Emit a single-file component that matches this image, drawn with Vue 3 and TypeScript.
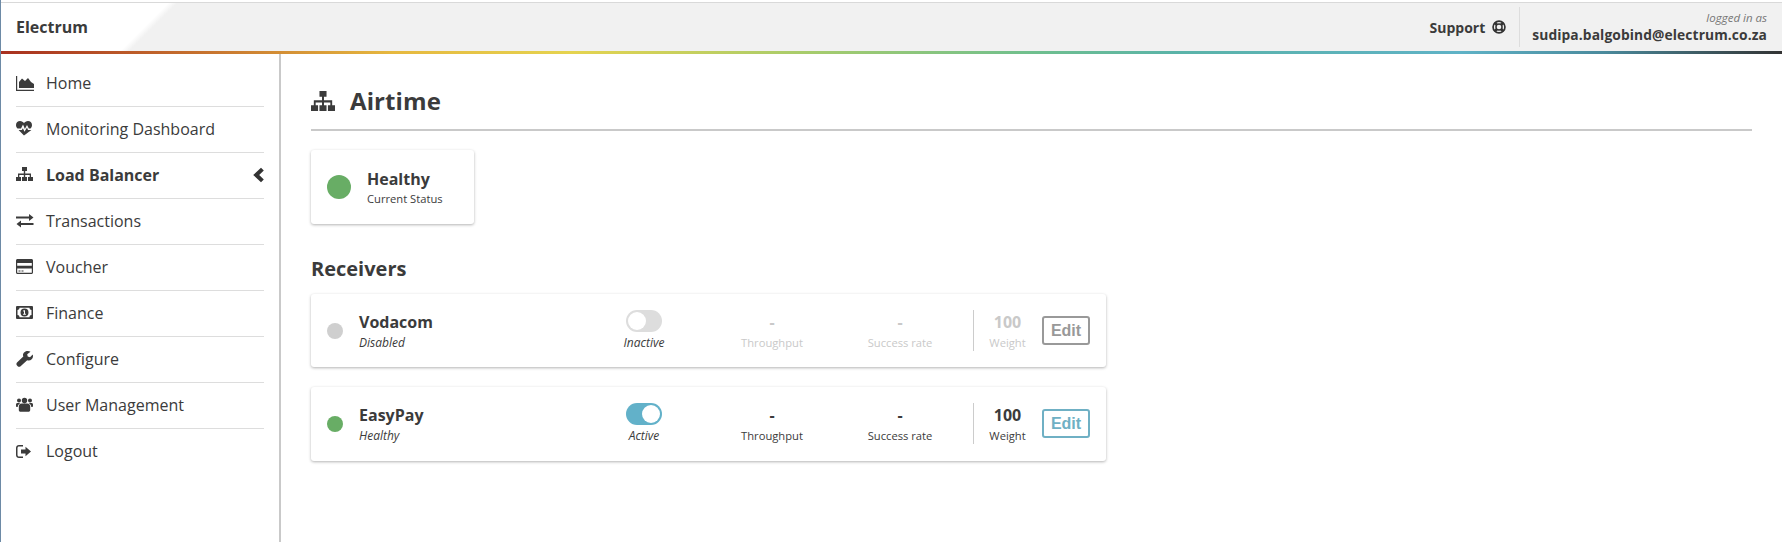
<script setup lang="ts">
interface NavItem { label: string; d: string; active?: boolean }
const nav: NavItem[] = [
  { label: 'Home', d: 'M0 2h1.200v13.800H18V17H0zM3 14V8l3-3.500L9 7l3-3 3 4 3 2v4z' },
  { label: 'Monitoring Dashboard', d: 'M8 15.500 2.600 10h3.200l1.100-1.800 1.600 3.600L11 7.600l1 2.400h3.400zM1.500 8.500C.6 7.500 0 6.400 0 5c0-2.500 1.900-4 4-4 1.800 0 3.200 1 4 2.200C8.800 2 10.200 1 12 1c2.100 0 4 1.500 4 4 0 1.400-.6 2.500-1.500 3.500h-1.700L11 5 8.900 9 7 4.600 5 8.500z' },
  { label: 'Load Balancer', active: true, d: 'M6 1h5v4H9.200v2.500H15V11h2v4h-5v-4h1.700V9H9.200v2H11v4H6v-4h1.800V9H3.300v2H5v4H0v-4h2V7.500h5.800V5H6z' },
  { label: 'Transactions', d: 'M0 4.500h13V2l4.500 3.500L13 9V6.500H0zM17.500 11H5V8.500L.5 12 5 15.500V13h12.500z' },
  { label: 'Voucher', d: 'M1.500 1h14c.8 0 1.500.7 1.500 1.500v12c0 .8-.7 1.500-1.500 1.500h-14C.7 16 0 15.300 0 14.500v-12C0 1.700.7 1 1.500 1zM1.200 5v2.800h14.600V5zM1.200 10.500v4.300h14.600v-4.300zM2.500 12.500h2v1h-2zM5.500 12.500h2v1h-2z' },
  { label: 'Finance', d: 'M1 2h15a1 1 0 0 1 1 1v11a1 1 0 0 1-1 1H1a1 1 0 0 1-1-1V3a1 1 0 0 1 1-1zM3.500 3.800c0 1.300-.8 2.200-2 2.200v5c1.200 0 2 .9 2 2.200h10c0-1.300.8-2.200 2-2.200V6c-1.200 0-2-.9-2-2.200zM8.500 4.500a4 4 0 1 1 0 8 4 4 0 0 1 0-8zM7.200 6.600v1h.8v2.200h-.9v1h2.800v-1H9V6.300H8z' },
  { label: 'Configure', d: 'M11.800 1c1 0 2 .3 2.700.8l-3.300 2.500.5 2.300 2.300.6 2.700-2.700c.3.600.3 1.200.3 1.700 0 2.500-2 4.300-4.300 4.300-.6 0-1-.1-1.500-.3L4.600 16.200c-.8.8-2.100.8-2.900 0l-.7-.7c-.8-.8-.8-2.100 0-2.900l6.300-6.200c-.2-.5-.3-1-.3-1.500C7 3 9.200 1 11.800 1z' },
  { label: 'User Management', d: 'M5.800 7.600h5.400c1.700 0 3 1.300 3 3v3.400c0 1-.8 1.800-1.800 1.800H4.600c-1 0-1.800-.8-1.800-1.800v-3.400c0-1.700 1.300-3 3-3zM8.500 1.800a2.700 2.700 0 1 1 0 5.400 2.700 2.700 0 0 1 0-5.400zM3 2.400a2 2 0 1 1 0 4 2 2 0 0 1 0-4zM14 2.400a2 2 0 1 1 0 4 2 2 0 0 1 0-4zM0 8.500C0 7.500.7 7 1.500 7h3c-1.800 1-2.700 2-2.800 4H1c-.6 0-1-.5-1-1zM17 8.500C17 7.500 16.300 7 15.500 7h-3c1.800 1 2.700 2 2.800 4h.7c.6 0 1-.5 1-1z' },
  { label: 'Logout', d: 'M3 2h4v1.500H3C2.200 3.500 1.500 4.200 1.500 5v7c0 .8.7 1.500 1.500 1.500h4V15H3c-1.700 0-3-1.300-3-3V5c0-1.700 1.300-3 3-3zM9.500 3.800 15 8.500l-5.500 4.700V10.500H5v-4h4.500z' },
]
const sitemap = nav[2].d

interface Receiver { name: string; note: string; state: string; on: boolean }
const receivers: Receiver[] = [
  { name: 'Vodacom', note: 'Disabled', state: 'Inactive', on: false },
  { name: 'EasyPay', note: 'Healthy', state: 'Active', on: true },
]
</script>

<template>
  <div class="page">
    <header class="topbar">
      <div class="brand">Electrum</div>
      <div class="account">
        <div class="support">
          <span>Support</span>
          <svg class="ring" viewBox="0 0 16 16" aria-hidden="true">
            <circle cx="8" cy="8" r="6.800" fill="none" stroke="#333" stroke-width="1.900" />
            <circle cx="8" cy="8" r="3.500" fill="none" stroke="#333" stroke-width="1.700" />
            <path d="M3.200 3.200l2.400 2.400M12.800 3.200l-2.400 2.400M3.200 12.800l2.400-2.400M12.800 12.800l-2.400-2.400" stroke="#333" stroke-width="3" fill="none" />
          </svg>
        </div>
        <div class="user">
          <em>logged in as</em>
          <strong>sudipa.balgobind@electrum.co.za</strong>
        </div>
      </div>
    </header>
    <div class="rainbow"></div>
    <div class="body">
      <aside class="sidebar">
        <a v-for="item in nav" :key="item.label" class="nav-item" :class="{ active: item.active }">
          <svg class="nav-icon" viewBox="0 0 18 17" aria-hidden="true"><path :d="item.d" fill="#3b3b3b" fill-rule="evenodd" /></svg>
          <span>{{ item.label }}</span>
          <svg v-if="item.active" class="chev" viewBox="0 0 12 16" aria-hidden="true"><path d="M9 .8 11.800 3.600 7.200 8l4.600 4.400L9 15.200 1.200 8z" fill="#333" /></svg>
        </a>
      </aside>
      <main class="content">
        <h1 class="title">
          <svg class="title-icon" viewBox="0 1 17 14" preserveAspectRatio="none" aria-hidden="true"><path :d="sitemap" fill="#3b3b3b" /></svg>
          Airtime
        </h1>
        <section class="status-card">
          <i class="dot big green"></i>
          <div>
            <div class="status-name">Healthy</div>
            <div class="small">Current Status</div>
          </div>
        </section>
        <h2 class="sub">Receivers</h2>
        <div class="rows">
          <article v-for="r in receivers" :key="r.name" class="row" :class="{ off: !r.on }">
            <i class="dot" :class="r.on ? 'green' : 'grey'"></i>
            <div class="who">
              <div class="who-name">{{ r.name }}</div>
              <em class="note">{{ r.note }}</em>
            </div>
            <div class="toggle-col">
              <span class="toggle" :class="{ on: r.on }"><span class="knob"></span></span>
              <em class="note">{{ r.state }}</em>
            </div>
            <div class="metric through"><b>-</b><span class="small">Throughput</span></div>
            <div class="metric rate"><b>-</b><span class="small">Success rate</span></div>
            <div class="metric weight"><b>100</b><span class="small">Weight</span></div>
            <button class="edit" type="button">Edit</button>
          </article>
        </div>
      </main>
    </div>
  </div>
</template>

<style>
html, body { margin: 0; background: #fff; }
</style>

<style scoped>
.page {
  height: 542px;
  overflow: hidden;
  display: flex;
  flex-direction: column;
  font-family: "Open Sans", sans-serif;
  color: #3b3b3b;
  border-left: 1px solid #6d8aa6;
  box-sizing: border-box;
  background: #fff;
}
.topbar {
  margin-top: 2px;
  height: 49px;
  flex: none;
  box-sizing: border-box;
  border-top: 1px solid #d9d9d9;
  background: #f1f1f1;
  display: flex;
  align-items: center;
  justify-content: space-between;
}
.brand {
  align-self: stretch;
  width: 175px;
  box-sizing: border-box;
  padding-left: 15px;
  background: linear-gradient(135deg, #fff 75%, #f1f1f1 79%);
  display: flex;
  align-items: center;
  font-size: 16px;
  font-weight: 700;
}
.account { display: flex; align-items: center; height: 40px; padding-right: 15px; }
.support {
  display: flex;
  align-items: center;
  gap: 7px;
  height: 100%;
  padding-right: 13px;
  border-right: 1px solid #ddd;
  font-size: 14px;
  font-weight: 700;
}
.ring { width: 14px; height: 14px; }
.user {
  padding-left: 12px;
  display: flex;
  flex-direction: column;
  align-items: flex-end;
}
.user em { font-size: 11.500px; line-height: 15px; color: #777; }
.user strong { font-size: 13.800px; line-height: 19px; letter-spacing: .1px; }
.rainbow {
  height: 3px;
  flex: none;
  background: linear-gradient(90deg, #a8301f 0%, #c8762f 12%, #e6b83f 22%, #e5d34f 32%, #a8cc6b 45%, #6fbf8e 58%, #5ab3a8 66%, #5fb2c6 82%, #4a8a9c 90%, #333 100%);
}
.body { flex: 1; display: flex; min-height: 0; }
.sidebar {
  width: 280px;
  flex: none;
  box-sizing: border-box;
  padding: 7px 15px 0;
  border-right: 2px solid #c9c9c9;
}
.nav-item {
  height: 46px;
  box-sizing: border-box;
  padding-bottom: 2px;
  display: flex;
  align-items: center;
  font-size: 16px;
  border-bottom: 1px solid #ddd;
}
.nav-item:last-child { border-bottom: 0; }
.nav-item.active { font-weight: 700; }
.nav-icon { width: 18px; height: 17px; margin-right: 12px; flex: none; }
.chev { width: 12px; height: 16px; margin-left: auto; }
.content { flex: 1; min-width: 0; padding: 0 30px 0 30px; }
.title {
  margin: 0;
  height: 77px;
  box-sizing: border-box;
  padding-top: 18px;
  border-bottom: 2px solid #c9c9c9;
  display: flex;
  align-items: center;
  gap: 15px;
  font-size: 24px;
  font-weight: 700;
  letter-spacing: .1px;
}
.title-icon { width: 24px; height: 20px; margin-top: 1px; }
.status-card {
  margin-top: 19px;
  width: 163px;
  height: 74px;
  box-sizing: border-box;
  padding-left: 16px;
  display: flex;
  align-items: center;
  gap: 16px;
  background: #fff;
  border-radius: 3px;
  box-shadow: 0 1px 3px rgba(0, 0, 0, .3);
}
.status-name { font-size: 16px; font-weight: 700; line-height: 22px; }
.small { font-size: 11.200px; line-height: 17px; }
.note { font-size: 12px; line-height: 17px; }
.dot { display: block; border-radius: 50%; flex: none; width: 16px; height: 16px; }
.dot.big { width: 24px; height: 24px; }
.green { background: #68ad65; }
.grey { background: #cfcfcf; }
.sub { margin: 31px 0 12px; font-size: 20px; line-height: 27px; font-weight: 700; }
.rows { display: flex; flex-direction: column; gap: 20px; width: 795px; }
.row {
  height: 73px;
  box-sizing: border-box;
  display: flex;
  align-items: center;
  padding-left: 16px;
  background: #fff;
  border-radius: 3px;
  box-shadow: 0 1px 3px rgba(0, 0, 0, .3);
}
.row:last-child { height: 74px; padding-bottom: 1px; }
.who { margin-left: 16px; width: 254px; display: flex; flex-direction: column; }
.who-name { font-size: 16px; font-weight: 700; line-height: 23px; }
.toggle-col { width: 60px; margin-left: 1px; display: flex; flex-direction: column; align-items: center; gap: 2px; }
.toggle {
  width: 36px;
  height: 22px;
  box-sizing: border-box;
  padding: 2px;
  border-radius: 11px;
  background: #ddd;
  display: flex;
}
.toggle.on { background: #62b1c9; justify-content: flex-end; }
.knob { width: 18px; height: 18px; border-radius: 50%; background: #fff; }
.metric { display: flex; flex-direction: column; align-items: center; }
.metric b { font-size: 16px; line-height: 23px; }
.through { width: 100px; margin-left: 48px; }
.rate { width: 100px; margin-left: 28px; }
.weight {
  width: 68px;
  margin-left: 23px;
  box-sizing: border-box;
  border-left: 1px solid #ccc;
  height: 41px;
  justify-content: center;
}
.edit {
  margin-left: 1px;
  width: 48px;
  height: 29px;
  padding: 0;
  box-sizing: border-box;
  background: #fff;
  border: 2px solid #6fb0c4;
  border-radius: 3px;
  color: #6fb0c4;
  font-family: "Liberation Sans", sans-serif;
  font-size: 16px;
  font-weight: 700;
}
.off .metric, .off .metric b { color: #c9c9c9; }
.off .edit { border-color: #999; color: #999; }
</style>
